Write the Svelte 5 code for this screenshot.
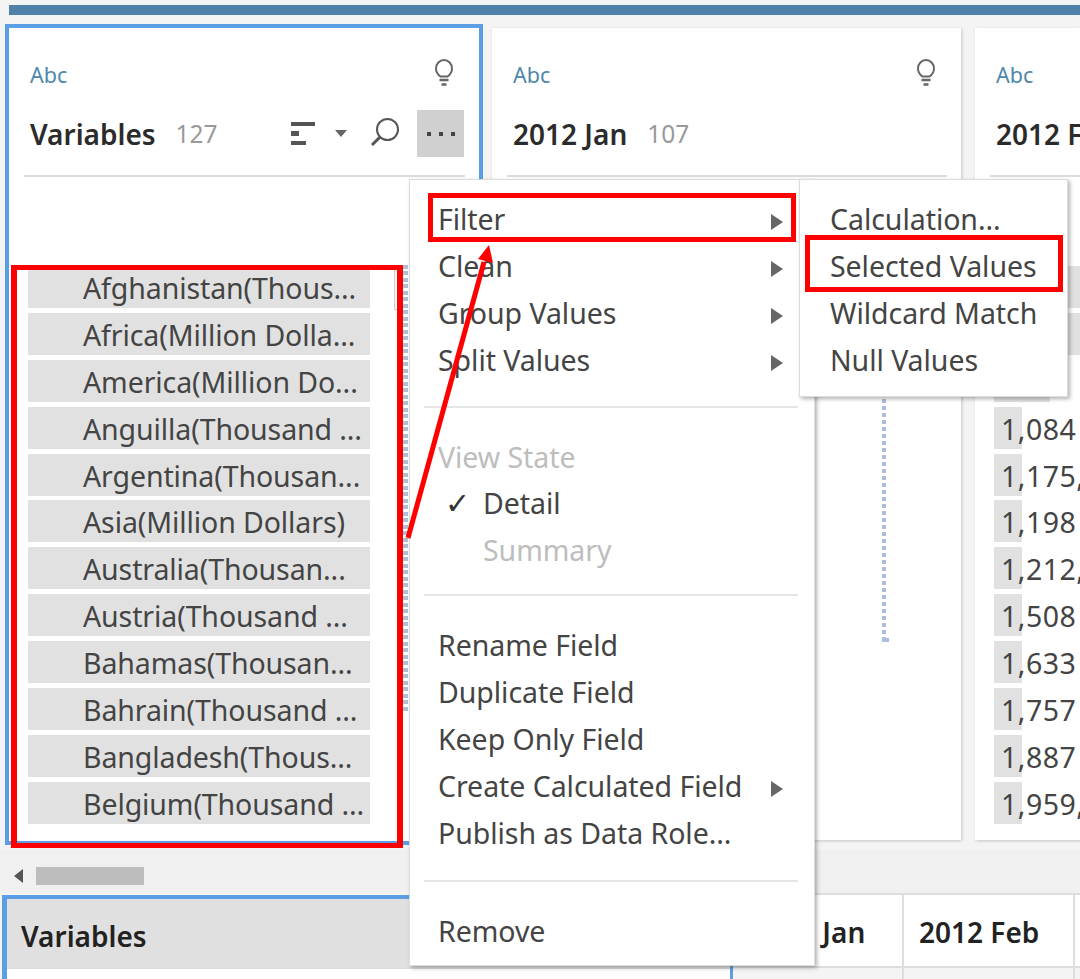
<script>
	const variables = [
		'Afghanistan(Thous...', 'Africa(Million Dolla...', 'America(Million Do...', 'Anguilla(Thousand ...',
		'Argentina(Thousan...', 'Asia(Million Dollars)', 'Australia(Thousan...', 'Austria(Thousand ...',
		'Bahamas(Thousan...', 'Bahrain(Thousand ...', 'Bangladesh(Thous...', 'Belgium(Thousand ...'
	];
	// first three bars sit behind the submenu, only their edges show
	const febRows = [
		{ text: '', width: 120 }, { text: '', width: 120 }, { text: '', width: 56 },
		{ text: '1,084', width: 28 }, { text: '1,175,', width: 28 }, { text: '1,198', width: 28 },
		{ text: '1,212,', width: 28 }, { text: '1,508', width: 28 }, { text: '1,633', width: 28 },
		{ text: '1,757', width: 28 }, { text: '1,887', width: 28 }, { text: '1,959,', width: 28 }
	];
	const filterItems = ['Filter', 'Clean', 'Group Values', 'Split Values'];
	const fieldItems = [
		{ label: 'Rename Field' }, { label: 'Duplicate Field' }, { label: 'Keep Only Field' },
		{ label: 'Create Calculated Field', sub: true }, { label: 'Publish as Data Role...' }
	];
	const subItems = ['Calculation...', 'Selected Values', 'Wildcard Match', 'Null Values'];
</script>

{#snippet bulb()}
	<svg class="bulb" width="18" height="28" viewBox="0 0 18 28" fill="none" stroke="#666" stroke-width="2">
		<path d="M5.5 17.5C3 15.8 1 13.4 1 9.5 1 4.8 4.6 1 9 1s8 3.8 8 8.5c0 3.9-2 6.3-4.500 8z" />
		<path d="M4.500 21h9M6.500 25.500h5" stroke-width="2.500" />
	</svg>
{/snippet}

{#snippet cardHead(title, count)}
	<div class="head">
		<div class="type-row">
			<span class="abc">Abc</span>
			{#if count}{@render bulb()}{/if}
		</div>
		<div class="title-row">
			<span class="title">{title}</span>
			{#if count}<span class="count">{count}</span>{/if}
			{#if title === 'Variables'}
				<div class="tools">
					<span class="sort"><i class="b1"></i><i class="b2"></i><i class="b3"></i></span>
					<span class="caret"></span>
					<svg class="search" width="32" height="32" viewBox="0 0 32 32" fill="none" stroke="#555">
						<circle cx="18.500" cy="12.500" r="10.500" stroke-width="2" />
						<path d="M11 20 3 28" stroke-width="3" />
					</svg>
					<span class="more"><i></i><i></i><i></i></span>
				</div>
			{/if}
		</div>
	</div>
{/snippet}

<div class="page">
	<div class="topbar"></div>

	<div class="board">
		<section class="card selected">
			{@render cardHead('Variables', '127')}
			<div class="body">
				<div class="list">
					{#each variables as name}
						<div class="row var">{name}</div>
					{/each}
				</div>
				<div class="range">
					<div class="range-box"></div>
					<div class="strip"></div>
				</div>
			</div>
		</section>

		<section class="card jan">
			{@render cardHead('2012 Jan', '107')}
			<div class="jan-body">
				<div class="dots"></div>
				<div class="dots-end"></div>
			</div>
		</section>

		<section class="card feb">
			{@render cardHead('2012 F', '')}
			<div class="body">
				<div class="list feb-list">
					{#each febRows as r}
						<div class="row num" style:width="{r.width}px">{r.text}</div>
					{/each}
				</div>
			</div>
		</section>
	</div>

	<div class="scroller">
		<span class="left-arrow"></span>
		<span class="thumb"></span>
	</div>

	<div class="table">
		<div class="col first">
			<div class="col-head">Variables</div>
		</div>
		<div class="col second">
			<div class="col-head">2012 Jan</div>
		</div>
		<div class="col">
			<div class="col-head">2012 Feb</div>
		</div>
		<div class="col last"></div>
	</div>

	<div class="menu main-menu">
		<div class="group">
			{#each filterItems as item}
				<div class="item">{item}<span class="arrow"></span></div>
			{/each}
		</div>
		<hr class="sep s1" />
		<div class="group">
			<div class="item off">View State</div>
			<div class="item sub-level"><span class="check">✓</span>Detail</div>
			<div class="item off sub-level">Summary</div>
		</div>
		<hr class="sep s2" />
		<div class="group">
			{#each fieldItems as item}
				<div class="item">{item.label}{#if item.sub}<span class="arrow"></span>{/if}</div>
			{/each}
		</div>
		<hr class="sep s3" />
		<div class="group">
			<div class="item">Remove</div>
		</div>
	</div>

	<div class="menu sub-menu">
		{#each subItems as item}
			<div class="item">{item}</div>
		{/each}
	</div>

	<div class="mark mark-list"></div>
	<div class="mark mark-filter"></div>
	<div class="mark mark-selected"></div>
	<svg class="callout" width="1080" height="979" viewBox="0 0 1080 979">
		<path d="M408 538 484 262" stroke="#f00" stroke-width="5" fill="none" />
		<path d="M489 245 478 259 493 263z" fill="#f00" />
	</svg>
</div>

<style>
	:global(body) {
		margin: 0;
		background: #f4f4f4;
	}
	.page {
		position: relative;
		width: 1080px;
		height: 979px;
		overflow: hidden;
		display: flex;
		flex-direction: column;
		background: #f4f4f4;
		font-family: 'Noto Sans', 'Liberation Sans', sans-serif;
		color: #444;
	}
	.topbar {
		flex: none;
		height: 10px;
		margin: 5px 0 0 9px;
		background: #4e80a9;
	}
	.board {
		flex: none;
		display: flex;
		align-items: flex-start;
		height: 826px;
		margin-top: 9px;
	}
	.card {
		flex: none;
		box-sizing: border-box;
		background: #fff;
		box-shadow: 1px 1px 3px rgba(0, 0, 0, 0.2);
	}
	.selected {
		width: 478px;
		height: 821px;
		margin-left: 5px;
		border: 4px solid #5a9fe3;
		box-shadow: none;
	}
	.jan {
		width: 469px;
		height: 812px;
		margin: 4px 0 0 9px;
	}
	.feb {
		width: 105px;
		height: 812px;
		margin: 4px 0 0 14px;
		overflow: hidden;
	}
	.head {
		box-sizing: border-box;
		height: 149px;
		margin: 0 14px 0 15px;
		padding: 30px 1px 0 6px;
		border-bottom: 2px solid #dcdcdc;
	}
	.feb .head {
		margin-right: 0;
	}
	.type-row {
		display: flex;
		align-items: center;
		justify-content: space-between;
		height: 34px;
		padding-right: 11px;
	}
	.abc {
		margin-top: -2px;
		font-size: 21.500px;
		color: #4f87ab;
	}
	.bulb {
		margin-top: -5px;
	}
	.title-row {
		display: flex;
		align-items: center;
		height: 47px;
		margin-top: 18px;
	}
	.title {
		font-size: 28px;
		font-weight: 600;
		white-space: nowrap;
		color: #2b2b2b;
	}
	.count {
		margin-left: 20px;
		font-size: 24.500px;
		color: #999;
	}
	.tools {
		display: flex;
		align-items: center;
		margin-left: auto;
	}
	.sort {
		display: flex;
		flex-direction: column;
		gap: 5px;
		width: 24px;
	}
	.sort i {
		display: block;
		height: 4.5px;
		background: #555;
	}
	.sort .b1 { width: 24px; }
	.sort .b2 { width: 8px; }
	.sort .b3 { width: 15px; }
	.caret {
		width: 0;
		height: 0;
		margin: 0 28px 0 20px;
		border-left: 6px solid transparent;
		border-right: 6px solid transparent;
		border-top: 7px solid #666;
	}
	.search {
		margin: -2px 16px 0 -6px;
	}
	.more {
		display: flex;
		align-items: center;
		justify-content: center;
		gap: 8px;
		width: 47px;
		height: 47px;
		background: #d0d0d0;
	}
	.more i {
		width: 4px;
		height: 4px;
		background: #444;
	}
	.body {
		display: flex;
		padding-top: 89px;
	}
	.list {
		display: flex;
		flex-direction: column;
		gap: 4.9px;
		flex: none;
		width: 342px;
		margin-left: 19px;
	}
	.feb-list {
		width: auto;
	}
	.row {
		box-sizing: border-box;
		height: 42px;
		line-height: 45px;
		font-size: 28.500px;
		white-space: nowrap;
		background: #e1e1e1;
	}
	.var {
		padding-left: 55px;
		overflow: hidden;
		letter-spacing: -0.100px;
	}
	.num {
		padding-left: 7px;
		letter-spacing: 0.500px;
	}
	.range {
		display: flex;
		align-items: flex-start;
		margin: -1px 0 0 24px;
	}
	.range-box {
		box-sizing: border-box;
		width: 11px;
		height: 45px;
		border: 1px solid #ccc;
	}
	.strip {
		width: 5px;
		height: 448px;
		margin-left: -2px;
		background: repeating-linear-gradient(#aebfd9 0 4px, #fff 4px 6.500px);
	}
	.jan-body {
		padding: 89px 0 0 390px;
	}
	.dots {
		width: 4px;
		height: 372px;
		background: repeating-linear-gradient(#a9bfdc 0 4px, #fff 4px 7px);
	}
	.dots-end {
		width: 7px;
		height: 4px;
		background: #a9bfdc;
	}
	.scroller {
		flex: none;
		box-sizing: border-box;
		display: flex;
		align-items: center;
		height: 43px;
		padding-top: 9px;
		background: #f0f0f0;
	}
	.left-arrow {
		width: 0;
		height: 0;
		margin-left: 14px;
		border-top: 7px solid transparent;
		border-bottom: 7px solid transparent;
		border-right: 9px solid #555;
	}
	.thumb {
		width: 108px;
		height: 18px;
		margin-left: 13px;
		background: #bdbdbd;
	}
	.table {
		flex: 1;
		display: flex;
		background: #f4f4f4;
	}
	.col {
		flex: none;
		box-sizing: border-box;
		width: 171px;
		border-right: 2px solid #ddd;
	}
	.col-head {
		box-sizing: border-box;
		height: 75px;
		padding-left: 15px;
		line-height: 75px;
		font-size: 28px;
		font-weight: 600;
		white-space: nowrap;
		color: #222;
		background: #fff;
		border-top: 2px solid #ddd;
		border-bottom: 2px solid #ddd;
	}
	.second .col-head {
		padding-left: 18px;
	}
	.first {
		width: 731px;
		margin: 2px 0 0 2px;
		border: solid #5a9fe3;
		border-width: 4px 3px 0 5px;
		background: #fff;
	}
	.first .col-head {
		height: 70px;
		padding-left: 14px;
		line-height: 74px;
		background: #e0e0e0;
		border-top: 0;
		border-bottom-width: 1px;
	}
	.last {
		flex: 1;
		border-right: 0;
	}
	.last::before {
		content: '';
		display: block;
		height: 75px;
		background: #fff;
		box-sizing: border-box;
		border-top: 2px solid #ddd;
		border-bottom: 2px solid #ddd;
	}
	.menu {
		position: absolute;
		box-sizing: border-box;
		background: #fff;
		border: 1px solid #ddd;
		box-shadow: 2px 2px 4px rgba(0, 0, 0, 0.3);
		font-size: 28.500px;
	}
	.main-menu {
		left: 409px;
		top: 179px;
		width: 406px;
		height: 787px;
		padding-top: 16px;
	}
	.sub-menu {
		left: 799px;
		top: 179px;
		width: 269px;
		height: 218px;
		padding-top: 16px;
	}
	.item {
		position: relative;
		height: 46.900px;
		padding-left: 28px;
		line-height: 47px;
		letter-spacing: -0.050px;
		white-space: nowrap;
	}
	.sub-menu .item {
		padding-left: 30px;
	}
	.off {
		color: #bdbdbd;
	}
	.sub-level {
		padding-left: 73px;
	}
	.check {
		position: absolute;
		left: 35px;
		top: 0;
		font-family: 'DejaVu Sans', sans-serif;
		font-size: 30px;
		font-weight: 700;
		color: #333;
	}
	.arrow {
		position: absolute;
		left: 361px;
		top: 18px;
		width: 0;
		height: 0;
		border-top: 8px solid transparent;
		border-bottom: 8px solid transparent;
		border-left: 12px solid #666;
	}
	.sep {
		height: 2px;
		margin: 0 16px 0 14px;
		border: 0;
		background: #e6e6e6;
	}
	.s1 { margin-top: 22px; margin-bottom: 26px; }
	.s2 { margin-top: 20px; margin-bottom: 26px; }
	.s3 { margin-top: 23px; margin-bottom: 26px; }
	.mark {
		position: absolute;
		box-sizing: border-box;
		border: 5px solid #f00;
	}
	.mark-list {
		left: 11px;
		top: 265px;
		width: 392px;
		height: 583px;
		border-width: 5px 6px;
	}
	.mark-filter {
		left: 428px;
		top: 193px;
		width: 368px;
		height: 49px;
	}
	.mark-selected {
		left: 805px;
		top: 235px;
		width: 258px;
		height: 57px;
	}
	.callout {
		position: absolute;
		left: 0;
		top: 0;
		pointer-events: none;
	}
</style>
